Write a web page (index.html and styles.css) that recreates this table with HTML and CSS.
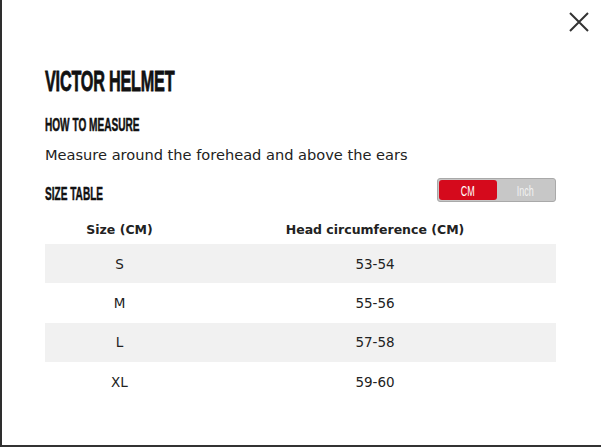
FILE: index.html
```html
<!DOCTYPE html>
<html lang="en">
<head>
<meta charset="utf-8">
<title>Victor Helmet size guide</title>
<link rel="stylesheet" href="styles.css">
</head>
<body>
<div class="modal">
  <div class="topbar">
    <button class="close" aria-label="Close">
      <svg width="20" height="20" viewBox="0 0 20 20"><path d="M1 1 L19 19 M19 1 L1 19" stroke="#333" stroke-width="2" fill="none"/></svg>
    </button>
  </div>
  <div class="content">
    <h1 class="title"><span class="cond">VICTOR HELMET</span></h1>
    <h2 class="subtitle"><span class="cond">HOW TO MEASURE</span></h2>
    <p class="desc">Measure around the forehead and above the ears</p>
    <div class="table-head">
      <h2 class="subtitle st"><span class="cond">SIZE TABLE</span></h2>
      <div class="toggle">
        <span class="opt active"><span class="cond-s">CM</span></span>
        <span class="opt"><span class="cond-s">Inch</span></span>
      </div>
    </div>
    <table class="sizes">
      <thead>
        <tr><th class="c1">Size (CM)</th><th>Head circumference (CM)</th></tr>
      </thead>
      <tbody>
        <tr class="alt"><td class="c1">S</td><td>53-54</td></tr>
        <tr><td class="c1">M</td><td>55-56</td></tr>
        <tr class="alt"><td class="c1">L</td><td>57-58</td></tr>
        <tr><td class="c1">XL</td><td>59-60</td></tr>
      </tbody>
    </table>
  </div>
</div>
</body>
</html>
```

FILE: styles.css
```css
* { box-sizing: border-box; }
html, body { margin: 0; padding: 0; background: #fff; }
body { font-family: "DejaVu Sans", "Open Sans", sans-serif; color: #222; }

.modal {
  width: 601px;
  height: 447px;
  border-left: 2px solid #2e2e2e;
  border-bottom: 2px solid #333;
  overflow: hidden;
}

.topbar {
  display: flex;
  justify-content: flex-end;
  padding: 12px 12px 0 0;
  height: 36px;
}
.close {
  border: 0;
  background: none;
  padding: 0;
  width: 20px;
  height: 20px;
  cursor: pointer;
}
.close svg { display: block; }

.content { padding: 0 45px 0 43px; }

.cond, .cond-s {
  display: inline-block;
  font-family: "Liberation Sans", Arial, sans-serif;
  font-weight: 700;
  transform-origin: left center;
  white-space: nowrap;
}

.title {
  margin: 31px 0 0 0;
  font-size: 29px;
  line-height: 29px;
  font-weight: 700;
  color: #111;
}
.title .cond {
  transform: scaleX(0.56);
  letter-spacing: -0.4px;
  -webkit-text-stroke: 0.8px #111;
}

.subtitle {
  margin: 20px 0 0 0;
  font-size: 18px;
  line-height: 18px;
  font-weight: 700;
  color: #111;
}
.subtitle .cond {
  transform: scaleX(0.56);
  letter-spacing: 0;
  -webkit-text-stroke: 0.5px #111;
}

.desc {
  margin: 11px 0 0 0;
  font-size: 14.6px;
  line-height: 20px;
  color: #222;
}

.table-head {
  margin-top: 13px;
  display: flex;
  justify-content: space-between;
  align-items: flex-start;
}
.table-head .st { margin: 7px 0 0 0; }

.toggle {
  display: flex;
  width: 119px;
  height: 24px;
  padding: 1px;
  border: 1px solid #a9a9a9;
  border-radius: 3px;
  background: #c7c7c7;
}
.opt {
  flex: 1;
  display: flex;
  align-items: center;
  justify-content: center;
  font-size: 15px;
  color: #f2f2f2;
  border-radius: 3px;
}
.opt.active { background: #d50a1c; color: #fff; }
.cond-s { transform: scaleX(0.6); transform-origin: center; font-weight: 400; }

.sizes {
  width: 100%;
  margin-top: 12px;
  border-collapse: collapse;
  font-size: 13px;
}
.sizes th {
  font-weight: 700;
  font-size: 12.5px;
  height: 29px;
  padding: 0;
  text-align: center;
  color: #222;
}
.sizes td {
  height: 39.3px;
  padding: 0;
  text-align: center;
  font-size: 13.5px;
  color: #222;
}
.sizes .c1 { width: 149px; }
.sizes tr.alt td { background: #f1f1f1; }
```
